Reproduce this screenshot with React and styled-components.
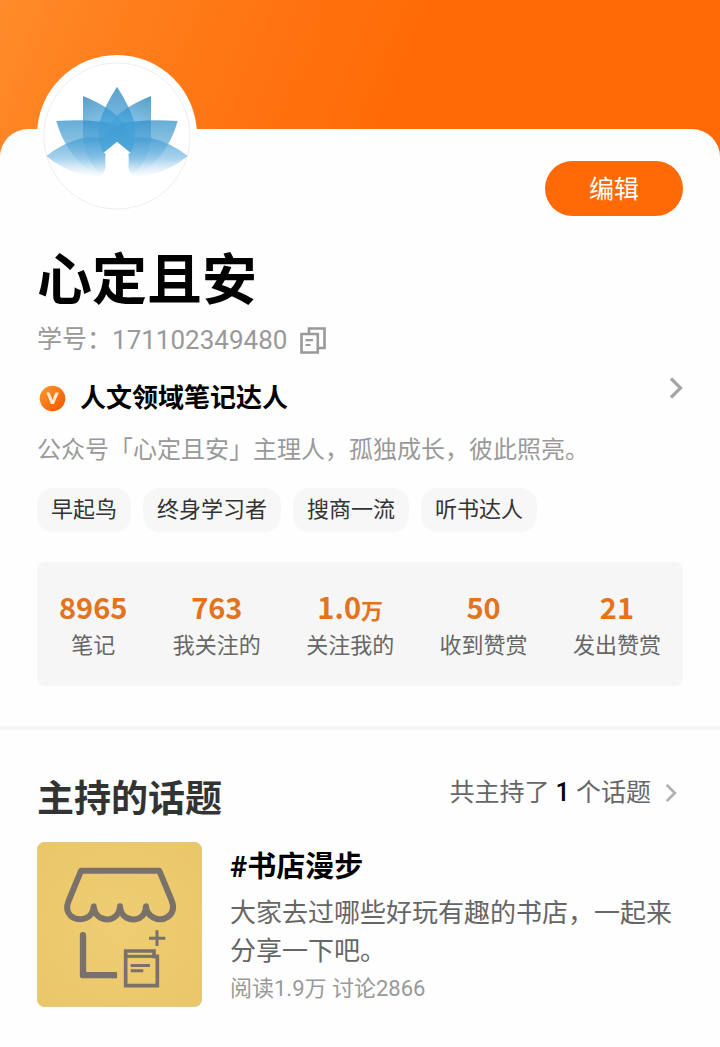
import React from "react";
import styled, { createGlobalStyle } from "styled-components";

const GlobalStyle = createGlobalStyle`
  *, *::before, *::after { box-sizing: border-box; }
  body {
    margin: 0;
    background: #fefefe;
    color: #000;
    font-family: Roboto, "Noto Sans CJK SC", sans-serif;
  }
  h1, h2, h3, p, ul, dl, dd { margin: 0; padding: 0; }
  button { border: 0; padding: 0; background: none; font: inherit; cursor: pointer; }
  svg { display: block; flex: none; }
`;

const Cover = styled.header`
  height: 157px;
  background: linear-gradient(112deg, #ff8b2a 0%, #ff7a18 24%, #ff6a06 56%, #ff6a06 100%);
`;

const Sheet = styled.main`
  position: relative;
  margin-top: -28px;
  border-radius: 28px 28px 0 0;
  background: #fefefe;
`;

const Section = styled.section`
  padding: 0 37px;
`;

const Head = styled.div`
  display: flex;
  justify-content: space-between;
  align-items: flex-start;
`;

const Avatar = styled.svg`
  width: 160px;
  height: 160px;
  margin-top: -74px;
`;

const EditButton = styled.button`
  && {
    width: 138px;
    height: 55px;
    padding-top: 2px;
    margin-top: 32px;
    border-radius: 28px;
    background: #ff6a06;
    color: #fff;
    font-size: 25px;
    line-height: 53px;
  }
`;

const Profile = styled.div`
  display: flex;
  align-items: center;
  justify-content: space-between;
  margin-top: 28px;
`;

const Name = styled.h1`
  font: 700 55px/62px "Noto Sans CJK SC", sans-serif;
`;

const IdRow = styled.div`
  display: flex;
  align-items: center;
  margin-top: 18px;
  color: #999;
  font-size: 25px;
  line-height: 32px;
`;

const IdNumber = styled.span`
  margin-right: 13px;
  font-size: 26px;
`;

const BadgeRow = styled.div`
  display: flex;
  align-items: center;
  gap: 14px;
  margin-top: 24px;
  padding-left: 2px;
  font-size: 26px;
  font-weight: 700;
  line-height: 36px;
`;

const Bio = styled.p`
  margin-top: 18px;
  color: #999;
  font-size: 24px;
  line-height: 32px;
`;

const Tags = styled.ul`
  display: flex;
  flex-wrap: wrap;
  gap: 12px;
  margin-top: 22px;
  list-style: none;
`;

const Tag = styled.li`
  padding: 0 14px;
  border-radius: 16px;
  background: #f7f7f7;
  color: #333;
  font-size: 22px;
  line-height: 44px;
`;

const Stats = styled.dl`
  display: flex;
  justify-content: space-between;
  margin-top: 30px;
  padding: 28px 22px 24px;
  border-radius: 8px;
  background: #f6f6f6;
`;

const Stat = styled.div`
  display: flex;
  flex-direction: column-reverse;
  align-items: center;
  gap: 8px;
`;

const StatValue = styled.dd`
  color: #e3731c;
  font: 700 29px/32px "Noto Sans CJK SC", sans-serif;
`;

const Unit = styled.span`
  font-size: 22px;
  line-height: 1;
`;

const StatLabel = styled.dt`
  color: #666;
  font-size: 22px;
  line-height: 32px;
`;

const Divider = styled.hr`
  height: 4px;
  margin: 40px 0 0;
  border: 0;
  background: #f5f5f5;
`;

const SectionHead = styled.div`
  display: flex;
  align-items: center;
  justify-content: space-between;
  padding-top: 46px;
`;

const SectionTitle = styled.h2`
  color: #333;
  font-size: 37px;
  font-weight: 700;
  line-height: 48px;
`;

const MoreLink = styled.a`
  display: flex;
  align-items: center;
  gap: 14px;
  padding: 0 6px 14px 0;
  color: #666;
  font-size: 25px;
  line-height: 34px;
  text-decoration: none;
`;

const Count = styled.strong`
  color: #000;
  font-weight: 500;
`;

const Topic = styled.article`
  display: flex;
  gap: 28px;
  padding: 18px 0 41px;
`;

const TopicCover = styled.svg`
  width: 165px;
  height: 165px;
`;

const TopicBody = styled.div`
  flex: 1;
  min-width: 0;
  padding-top: 7px;
`;

const TopicTitle = styled.h3`
  font-size: 29px;
  font-weight: 700;
  line-height: 36px;
`;

const TopicText = styled.p`
  margin-top: 9px;
  color: #666;
  font-size: 26px;
  line-height: 38px;
`;

const TopicMeta = styled.p`
  margin-top: 5px;
  color: #999;
  font-size: 22px;
  line-height: 28px;
`;

function Chevron({ width, height, color }) {
  return (
    <svg width={width} height={height} viewBox="0 0 14 22" fill="none" aria-hidden="true">
      <path d="M2 1.5 11.5 11 2 20.5" stroke={color} strokeWidth="3.2" />
    </svg>
  );
}

function Lotus() {
  return (
    <Avatar viewBox="112 45 480 480" role="img" aria-label="头像">
      <defs>
        <linearGradient id="petal" gradientUnits="userSpaceOnUse" x1="0" y1="140" x2="0" y2="400">
          <stop offset="0" stopColor="#1f7db9" />
          <stop offset="0.4" stopColor="#3f9fd6" />
          <stop offset="0.75" stopColor="#43a2d8" stopOpacity="0.8" />
          <stop offset="1" stopColor="#b9dcf2" stopOpacity="0.1" />
        </linearGradient>
        <linearGradient id="upper" gradientUnits="userSpaceOnUse" x1="250" y1="168" x2="320" y2="400">
          <stop offset="0" stopColor="#1f7db9" />
          <stop offset="0.35" stopColor="#58a9da" />
          <stop offset="0.75" stopColor="#3f9fd6" stopOpacity="0.8" />
          <stop offset="1" stopColor="#b9dcf2" stopOpacity="0.1" />
        </linearGradient>
        <linearGradient id="middle" gradientUnits="userSpaceOnUse" x1="0" y1="238" x2="0" y2="400">
          <stop offset="0" stopColor="#2a8bc6" />
          <stop offset="0.6" stopColor="#6fb6e0" />
          <stop offset="1" stopColor="#d5eaf7" stopOpacity="0.1" />
        </linearGradient>
        <linearGradient id="low" gradientUnits="userSpaceOnUse" x1="0" y1="288" x2="0" y2="412">
          <stop offset="0" stopColor="#3c98d0" />
          <stop offset="0.55" stopColor="#86c0e6" stopOpacity="0.95" />
          <stop offset="1" stopColor="#eaf4fb" stopOpacity="0.3" />
        </linearGradient>
        <g id="side">
          <path d="M250 168 V290 Q252 350 300 400 H390 Q412 320 384 266 Q350 208 250 168Z" fill="url(#upper)" opacity="0.75" />
          <path d="M170 243 Q280 236 340 252 Q384 268 404 310 L370 400 H280 Q198 345 170 243Z" fill="url(#middle)" opacity="0.72" />
          <path d="M140 348 Q190 308 250 294 Q320 284 376 318 V376 Q350 402 300 408 Q215 410 140 348Z" fill="url(#low)" opacity="0.75" />
        </g>
      </defs>
      <circle cx="352" cy="285" r="240" fill="#fefefe" />
      <circle cx="352" cy="288" r="219" fill="#fff" stroke="#e4e4e9" strokeWidth="2" />
      <use href="#side" />
      <use href="#side" transform="matrix(-1 0 0 1 704 0)" />
      <path d="M352 140 Q316 196 300 244 Q284 330 352 395 Q420 330 404 244 Q388 196 352 140Z" fill="url(#petal)" opacity="0.72" />
      <path d="M352 305 394 340H387V372Q382 384 400 412H304Q322 384 317 372V340H310Z" fill="#fff" />
    </Avatar>
  );
}

function CopyIcon() {
  return (
    <svg width="26" height="27" viewBox="0 0 26 27" fill="none" stroke="#999" strokeWidth="2.6" aria-hidden="true">
      <path d="M9 6V1.5H24.5V21H18" />
      <path d="M1.5 7H17.8V25.5H1.5Z" />
      <path d="M5.5 13.2H13M5.5 18H10.5" strokeWidth="2.2" />
    </svg>
  );
}

function VBadge() {
  return (
    <svg width="27" height="27" viewBox="0 0 27 27" aria-hidden="true">
      <defs>
        <linearGradient id="badge" x1="0" y1="0" x2="1" y2="1">
          <stop offset="0" stopColor="#ff9a2e" />
          <stop offset="1" stopColor="#ee5500" />
        </linearGradient>
      </defs>
      <circle cx="13.5" cy="13.5" r="12.8" fill="url(#badge)" />
      <path d="M7.2 7.5H10.6L13.5 14.8 16.4 7.5H19.8L15 19H12Z" fill="#ffe9d2" />
    </svg>
  );
}

function BookshopCover() {
  return (
    <TopicCover viewBox="21 35 495 492" preserveAspectRatio="none" role="img" aria-label="书店漫步">
      <defs>
        <radialGradient id="paper" cx="0.5" cy="0.5" r="0.75">
          <stop offset="0" stopColor="#efcd73" />
          <stop offset="1" stopColor="#e9c667" />
        </radialGradient>
      </defs>
      <rect x="22" y="36" width="493" height="490" rx="22" fill="url(#paper)" stroke="#d8be78" strokeWidth="2" />
      <g fill="none" stroke="#7a716a" strokeLinejoin="round" strokeLinecap="round">
        <path
          d="M153 121H388L424 207Q438 240 414 258Q394 272 370 260Q350 250 348 227Q347 252 328 262Q309 271 290 261Q271 250 270 227Q269 250 250 261Q232 271 212 261Q193 250 191 227Q189 252 170 261Q144 272 123 256Q104 238 116 210Z"
          strokeWidth="18"
        />
        <path d="M159 313V432H252" strokeWidth="19" />
        <path d="M252 423V441" strokeWidth="18" strokeLinecap="butt" />
      </g>
      <g fill="none" stroke="#7a716a">
        <path d="M381 298V345M357 322H406" strokeWidth="9" />
        <path d="M287 360H372V376H382V463H287Z" strokeWidth="11" />
        <path d="M287 376H376" strokeWidth="9" />
        <path d="M302 403H360M302 419H340" strokeWidth="9" />
      </g>
    </TopicCover>
  );
}

const tags = ["早起鸟", "终身学习者", "搜商一流", "听书达人"];

const stats = [
  { label: "笔记", value: "8965" },
  { label: "我关注的", value: "763" },
  { label: "关注我的", value: "1.0", unit: "万" },
  { label: "收到赞赏", value: "50" },
  { label: "发出赞赏", value: "21" },
];

export default function App() {
  return (
    <>
      <GlobalStyle />
      <Cover />
      <Sheet>
        <Section>
          <Head>
            <Lotus />
            <EditButton type="button">编辑</EditButton>
          </Head>
          <Profile>
            <div>
              <Name>心定且安</Name>
              <IdRow>
                学号：<IdNumber>171102349480</IdNumber>
                <button type="button" aria-label="复制学号">
                  <CopyIcon />
                </button>
              </IdRow>
              <BadgeRow>
                <VBadge />
                人文领域笔记达人
              </BadgeRow>
              <Bio>公众号「心定且安」主理人，孤独成长，彼此照亮。</Bio>
              <Tags>
                {tags.map((tag) => (
                  <Tag key={tag}>{tag}</Tag>
                ))}
              </Tags>
            </div>
            <button type="button" aria-label="查看资料">
              <Chevron width="14" height="24" color="#a6a6a6" />
            </button>
          </Profile>
          <Stats>
            {stats.map(({ label, value, unit }) => (
              <Stat key={label}>
                <StatLabel>{label}</StatLabel>
                <StatValue>
                  {value}
                  {unit && <Unit>{unit}</Unit>}
                </StatValue>
              </Stat>
            ))}
          </Stats>
        </Section>
        <Divider />
        <Section>
          <SectionHead>
            <SectionTitle>主持的话题</SectionTitle>
            <MoreLink href="#topics">
              <span>
                共主持了 <Count>1</Count> 个话题
              </span>
              <Chevron width="12" height="20" color="#b0b0b0" />
            </MoreLink>
          </SectionHead>
          <Topic>
            <BookshopCover />
            <TopicBody>
              <TopicTitle>#书店漫步</TopicTitle>
              <TopicText>大家去过哪些好玩有趣的书店，一起来分享一下吧。</TopicText>
              <TopicMeta>阅读1.9万 讨论2866</TopicMeta>
            </TopicBody>
          </Topic>
        </Section>
      </Sheet>
    </>
  );
}
